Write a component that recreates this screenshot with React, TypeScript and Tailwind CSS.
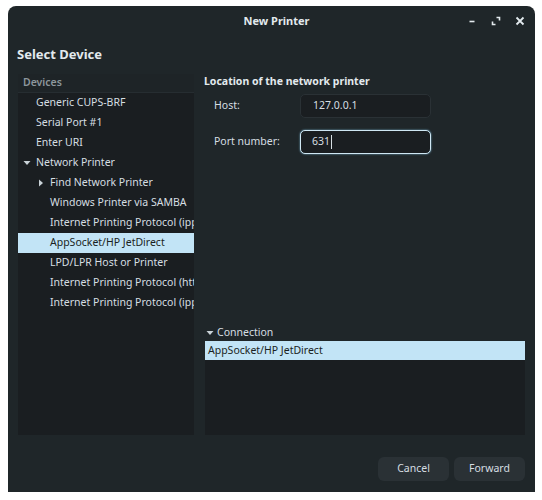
import React from 'react';

const font = { fontFamily: '"Noto Sans", "Open Sans", sans-serif' };

type Row = { label: string; level: number; arrow?: 'down' | 'right'; selected?: boolean };

const rows: Row[] = [
  { label: 'Generic CUPS-BRF', level: 1 },
  { label: 'Serial Port #1', level: 1 },
  { label: 'Enter URI', level: 1 },
  { label: 'Network Printer', level: 1, arrow: 'down' },
  { label: 'Find Network Printer', level: 2, arrow: 'right' },
  { label: 'Windows Printer via SAMBA', level: 2 },
  { label: 'Internet Printing Protocol (ipp)', level: 2 },
  { label: 'AppSocket/HP JetDirect', level: 2, selected: true },
  { label: 'LPD/LPR Host or Printer', level: 2 },
  { label: 'Internet Printing Protocol (https)', level: 2 },
  { label: 'Internet Printing Protocol (ipps)', level: 2 },
];

function Arrow({ dir }: { dir: 'down' | 'right' }) {
  return dir === 'down' ? (
    <svg width="8" height="8" viewBox="0 0 8 8" className="shrink-0">
      <path d="M0.5 2 L7.5 2 L4 6 Z" fill="#c9d2d7" />
    </svg>
  ) : (
    <svg width="8" height="8" viewBox="0 0 8 8" className="shrink-0">
      <path d="M2 0.5 L6 4 L2 7.5 Z" fill="#c9d2d7" />
    </svg>
  );
}

function DeviceRow({ row }: { row: Row }) {
  const indent = row.level === 1 ? 'pl-[18px]' : 'pl-[32px]';
  return (
    <div
      className={`relative h-[20px] flex items-center whitespace-nowrap overflow-hidden ${indent} ${
        row.selected ? 'bg-[#c2e4f6] text-[#1a1f22]' : 'text-[#d6dee2]'
      }`}
    >
      {row.arrow && (
        <span className={`absolute top-[6px] ${row.level === 1 ? 'left-[5px]' : 'left-[19px]'}`}>
          <Arrow dir={row.arrow} />
        </span>
      )}
      {row.label}
    </div>
  );
}

export default function App() {
  return (
    <div className="w-[542px] h-[500px] bg-white pt-[6px] pl-[8px]" style={font}>
      <div className="w-[527px] h-[486px] rounded-t-[8px] bg-[#1f2629] flex flex-col text-[10.5px]">
        {/* title bar */}
        <div className="relative h-[30px] shrink-0 flex items-center justify-center">
          <span className="text-[11px] font-bold text-[#e3eaee] ml-[10px]">New Printer</span>
          <div className="absolute right-[10px] top-0 h-[30px] flex items-center gap-[14px] text-[#e3eaee]">
            <svg width="10" height="10" viewBox="0 0 10 10">
              <path d="M2.5 5.5 H7.5" stroke="#e3eaee" strokeWidth="1.6" />
            </svg>
            <svg width="10" height="10" viewBox="0 0 10 10">
              <path d="M5.5 1.5 H8.5 V4.5 M1.5 5.5 V8.5 H4.5" stroke="#e3eaee" strokeWidth="1.6" fill="none" />
            </svg>
            <svg width="10" height="10" viewBox="0 0 10 10">
              <path d="M1.5 1.5 L8.5 8.5 M8.5 1.5 L1.5 8.5" stroke="#e3eaee" strokeWidth="1.8" />
            </svg>
          </div>
        </div>

        <div className="flex-1 flex flex-col px-[10px] pt-[9px] pb-[11px]">
          <div className="h-[20px] flex items-center text-[13px] font-bold text-[#e3eaee] -ml-px">
            Select Device
          </div>

          <div className="mt-[9px] flex-1 flex gap-[10px]">
            {/* device list */}
            <div className="w-[176px] bg-[#1a1e21] flex flex-col">
              <div className="h-[19px] flex items-center pl-[5px] bg-[#1e2427] border-b border-[#262d31] text-[#8c969c] font-semibold">
                Devices
              </div>
              {rows.map((r) => (
                <DeviceRow key={r.label} row={r} />
              ))}
            </div>

            {/* right side */}
            <div className="flex-1 flex flex-col">
              <div className="h-[14px] flex items-center font-bold text-[#e3eaee] mt-px">
                Location of the network printer
              </div>
              <div className="mt-[5px] pl-[10px] flex flex-col gap-[12px]">
                <div className="flex items-center">
                  <span className="w-[86px] text-[#d6dee2]">Host:</span>
                  <div className="w-[131px] h-[24px] rounded-[5px] bg-[#1a1e21] border border-[#2a3135] flex items-center pl-[12px] text-[#d6dee2]">
                    127.0.0.1
                  </div>
                </div>
                <div className="flex items-center">
                  <span className="w-[86px] text-[#d6dee2]">Port number:</span>
                  <div className="w-[131px] h-[24px] rounded-[5px] bg-[#1a1e21] border-[1.5px] border-[#cfe7f3] shadow-[0_0_2px_#7fb8d6] flex items-center pl-[11px] text-[#d6dee2]">
                    631
                    <span className="ml-px w-px h-[14px] bg-[#d6dee2]" />
                  </div>
                </div>
              </div>

              <div className="flex-1" />

              <div className="h-[16px] flex items-center gap-[3px] pl-[2px] text-[#d6dee2]">
                <Arrow dir="down" />
                Connection
              </div>
              <div className="h-[94px] ml-px bg-[#1a1e21]">
                <div className="h-[19px] flex items-center pl-[3px] bg-[#c2e4f6] text-[#1a1f22]">
                  AppSocket/HP JetDirect
                </div>
              </div>
            </div>
          </div>

          <div className="mt-[22px] flex justify-end gap-[5px]">
            <button className="w-[71px] h-[24px] rounded-[6px] bg-[#2a3135] text-[#d6dee2] text-[10.5px]">
              Cancel
            </button>
            <button className="w-[71px] h-[24px] rounded-[6px] bg-[#2a3135] text-[#d6dee2] text-[10.5px]">
              Forward
            </button>
          </div>
        </div>
      </div>
    </div>
  );
}
